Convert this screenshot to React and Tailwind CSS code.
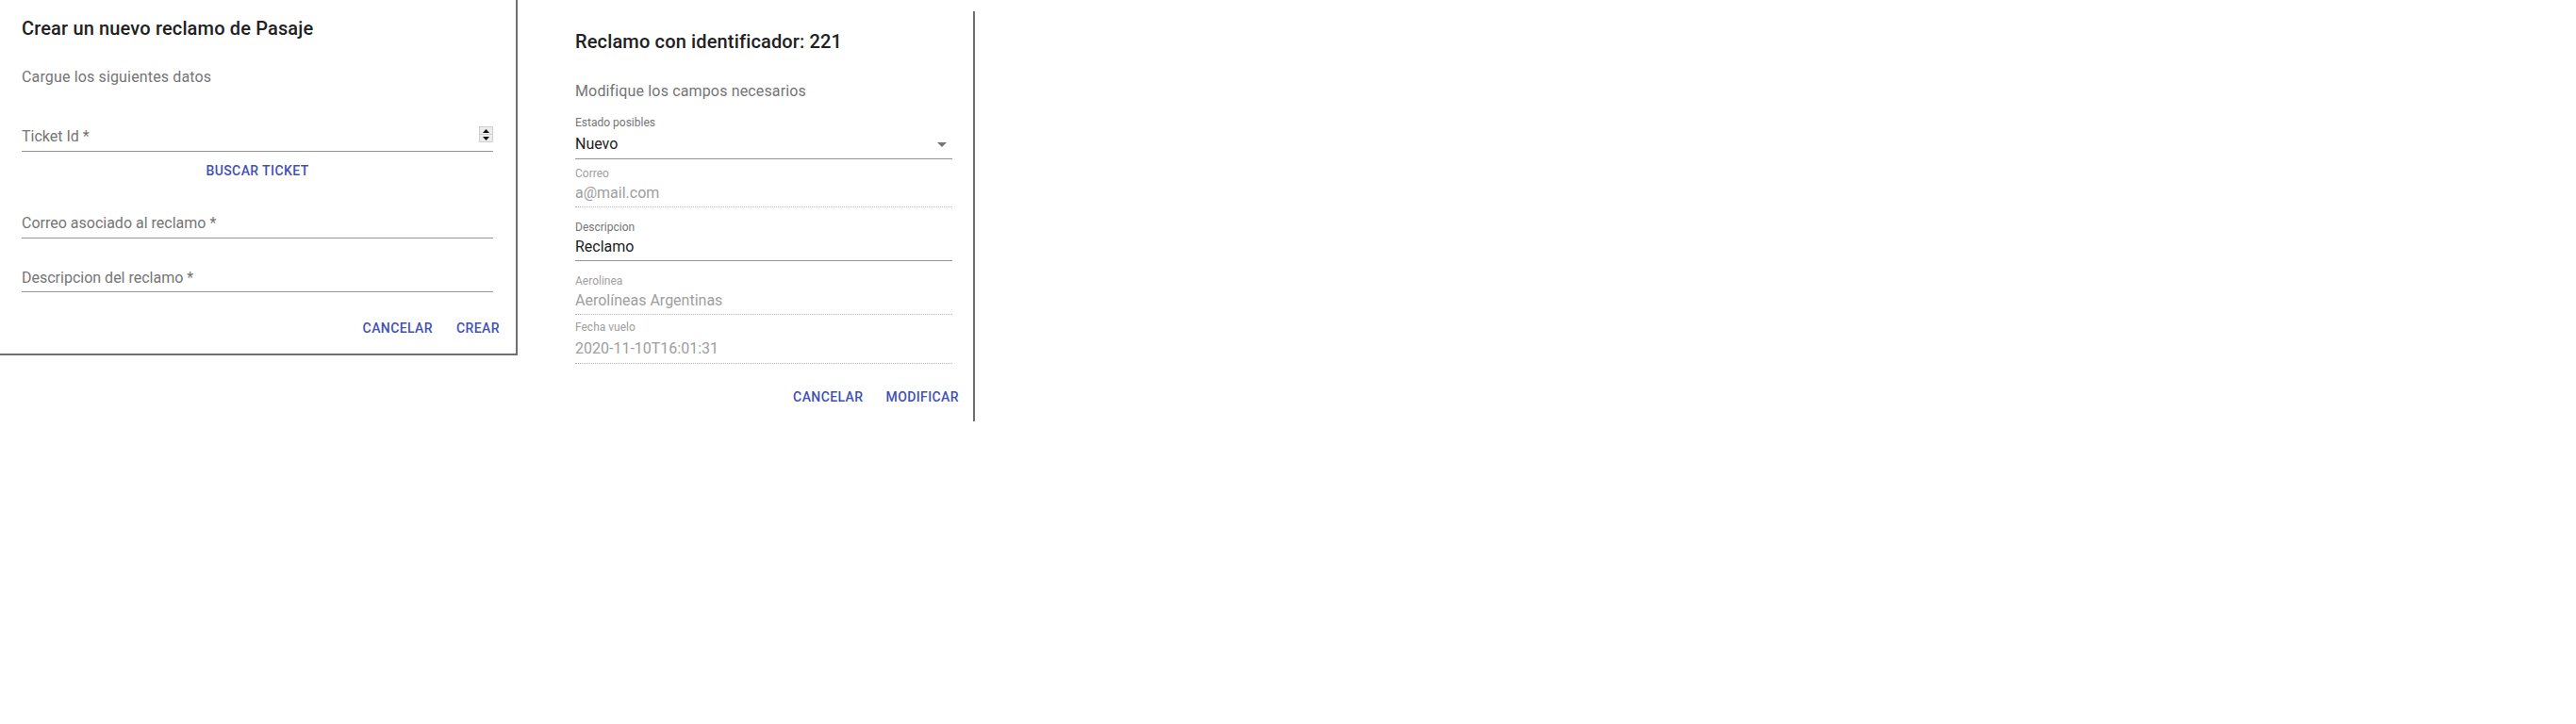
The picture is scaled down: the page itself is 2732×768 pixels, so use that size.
import React from 'react';

const font = { fontFamily: 'Roboto, "Noto Sans", Arial, sans-serif' };

function Spinner() {
  return (
    <div className="flex h-[17px] w-[15px] flex-col border border-[#cfcfcf] bg-[#ececec]">
      <div className="flex flex-1 items-center justify-center border-b border-[#cfcfcf]">
        <svg width="7" height="4" viewBox="0 0 7 4">
          <path d="M0 4 L3.5 0 L7 4 Z" fill="#111" />
        </svg>
      </div>
      <div className="flex flex-1 items-center justify-center">
        <svg width="7" height="4" viewBox="0 0 7 4">
          <path d="M0 0 L3.5 4 L7 0 Z" fill="#111" />
        </svg>
      </div>
    </div>
  );
}

function TextButton({ children }) {
  return (
    <button className="h-9 min-w-16 px-2 text-[14px] font-medium uppercase tracking-[0.02857em] text-[#3f51b5]">
      {children}
    </button>
  );
}

function CreateDialog() {
  return (
    <div className="flex h-[377px] w-[549px] shrink-0 flex-col border-r-2 border-b-2 border-[#6e6e6e] bg-white pl-[23px] pr-[24px]">
      <h2 className="mt-[14px] h-8 text-[20px] leading-8 font-medium tracking-[0.0075em] text-[#212121]">
        Crear un nuevo reclamo de Pasaje
      </h2>
      <p className="mt-[24px] h-6 text-[16px] leading-6 tracking-[0.00938em] text-[#757575]">
        Cargue los siguientes datos
      </p>

      <div className="mt-[39px] flex items-end justify-between border-b border-[#949494] pb-[3px]">
        <span className="text-[16px] leading-6 text-[#757575]">Ticket Id *</span>
        <div className="mb-[6px]">
          <Spinner />
        </div>
      </div>

      <div className="mt-[2px] flex justify-center">
        <TextButton>Buscar ticket</TextButton>
      </div>

      <div className="mt-[26px] border-b border-[#949494] pb-[3px]">
        <span className="text-[16px] leading-6 text-[#757575]">Correo asociado al reclamo *</span>
      </div>

      <div className="mt-[30px] border-b border-[#949494] pb-[2px]">
        <span className="text-[16px] leading-6 text-[#757575]">Descripcion del reclamo *</span>
      </div>

      <div className="-mr-[16px] mt-[20px] flex justify-end gap-2">
        <TextButton>Cancelar</TextButton>
        <TextButton>Crear</TextButton>
      </div>
    </div>
  );
}

function Field({ label, value, disabled, select, mt, lt, pb }) {
  return (
    <div className={mt}>
      <div className={`h-4 text-[12px] leading-4 ${disabled ? 'text-[#a0a0a0]' : 'text-[#757575]'}`}>{label}</div>
      <div
        className={`${lt} flex items-center justify-between ${pb} ${
          disabled ? 'border-b border-dotted border-[#b5b5b5]' : 'border-b border-[#949494]'
        }`}
      >
        <span className={`h-6 text-[16px] leading-6 ${disabled ? 'text-[#9e9e9e]' : 'text-[#212121]'}`}>{value}</span>
        {select && (
          <svg width="24" height="24" viewBox="0 0 24 24" className="-mr-[1px]">
            <path d="M7 10l5 5 5-5z" fill="#757575" />
          </svg>
        )}
      </div>
    </div>
  );
}

function EditDialog() {
  return (
    <div className="mt-[12px] ml-[37px] flex h-[435px] w-[448px] shrink-0 flex-col border-r-2 border-[#6e6e6e] bg-white pl-[24px] pr-[22px]">
      <h2 className="mt-[16px] h-8 text-[20px] leading-8 font-medium tracking-[0.0075em] text-[#212121]">
        Reclamo con identificador: 221
      </h2>
      <p className="mt-[25px] h-6 text-[16px] leading-6 tracking-[0.00938em] text-[#757575]">
        Modifique los campos necesarios
      </p>

      <Field label="Estado posibles" value="Nuevo" select mt="mt-[13px]" lt="mt-[3px]" pb="pb-[3px]" />
      <Field label="Correo" value="a@mail.com" disabled mt="mt-[7px]" lt="mt-[1px]" pb="pb-[2px]" />
      <Field label="Descripcion" value="Reclamo" mt="mt-[13px]" lt="mt-[1px]" pb="pb-[2px]" />
      <Field label="Aerolinea" value="Aerolíneas Argentinas" disabled mt="mt-[13px]" lt="mt-[1px]" pb="pb-[2px]" />
      <Field label="Fecha vuelo" value="2020-11-10T16:01:31" disabled mt="mt-[5px]" lt="mt-[3px]" pb="pb-[3px]" />

      <div className="-mr-[15px] mt-[17px] flex justify-end gap-2">
        <TextButton>Cancelar</TextButton>
        <TextButton>Modificar</TextButton>
      </div>
    </div>
  );
}

export default function App() {
  return (
    <div className="flex h-[768px] w-[2732px] items-start bg-white" style={font}>
      <CreateDialog />
      <EditDialog />
    </div>
  );
}
